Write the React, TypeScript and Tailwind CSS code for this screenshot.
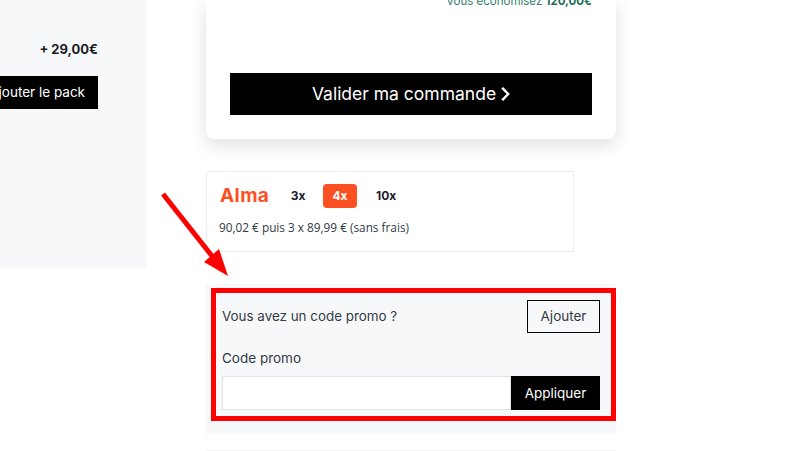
import React from "react";

const font = "font-['Inter','Liberation_Sans',sans-serif]";

function AlmaCard() {
  return (
    <div className="mt-8 h-[81px] w-[368px] border border-[#eeeeee] pl-3 pt-3">
      <div className="flex h-6 items-center">
        <span className="w-[63px] pl-px text-[19px] font-bold leading-6 tracking-[0.4px] text-[#fa5022]">Alma</span>
        <span className="w-[32px] text-center text-xs font-bold text-[#1c1c2b]">3x</span>
        <span className="ml-[9px] flex h-6 w-[34px] items-center justify-center rounded bg-[#fa5022] text-xs font-bold text-white">
          4x
        </span>
        <span className="ml-[19px] text-xs font-bold text-[#1c1c2b]">10x</span>
      </div>
      <p className="mt-[11px] font-['Open_Sans',sans-serif] text-[11.8px] leading-4 text-[#333a45]">
        90,02 € puis 3 x 89,99 € (sans frais)
      </p>
    </div>
  );
}

function PromoBox() {
  return (
    <div className="relative mt-8 h-[150px] bg-[#f7f8fa] px-4 pt-4">
      <div className="flex h-[33px] items-center justify-between">
        <span className="text-[13.4px] text-[#333a45]">Vous avez un code promo ?</span>
        <button className="h-[33px] w-[73px] border border-black text-[13.5px] text-[#333a45]">Ajouter</button>
      </div>
      <label className="mt-[16px] block text-[13.5px] leading-[18px] text-[#333a45]">Code promo</label>
      <div className="mt-[9px] flex h-[34px]">
        <input className="min-w-0 flex-1 border border-[#dfe1e6] bg-white" />
        <button className="w-[89px] bg-black text-[13.5px] text-white">Appliquer</button>
      </div>
      {/* annotation */}
      <div className="absolute left-[5px] top-[4px] h-[133px] w-[405px] border-[5px] border-[#ff0000]" />
    </div>
  );
}

export default function App() {
  return (
    <div className={`relative flex h-[451px] w-[811px] items-start overflow-hidden bg-white ${font}`}>
      <div className="flex h-[268px] w-[146px] shrink-0 flex-col items-end bg-[#f7f8fa] pr-12 pt-[41px]">
        <span className="text-[13px] font-bold leading-4 text-[#1c1c24]">+ 29,00€</span>
        <button className="mt-[19px] h-[33px] w-[124px] shrink-0 overflow-hidden bg-black pr-[13px] text-right text-[13.5px] whitespace-nowrap text-white">
          Ajouter le pack
        </button>
      </div>

      <div className="ml-[60px] w-[410px] shrink-0">
        <div className="flex h-[139px] flex-col rounded-b-lg bg-white px-6 shadow-[0_6px_18px_rgba(0,0,0,0.13)]">
          <p className="-mt-[6px] h-[14px] text-right text-[11.5px] leading-[14px] text-[#2f7d6b]">
            Vous économisez <b className="text-[#1e6f5c]">120,00€</b>
          </p>
          <button className="mt-[65px] flex h-[42px] w-full items-center justify-center gap-[5px] bg-black text-[17.5px] text-white">
            Valider ma commande
            <svg width="9" height="14" viewBox="0 0 9 14" fill="none" stroke="currentColor" strokeWidth="2.4">
              <path d="M1.2 0.8 L7.2 7 L1.2 13.2" />
            </svg>
          </button>
        </div>
        <AlmaCard />
        <PromoBox />
        <div className="mt-4 h-px bg-[#f3f3f3]" />
      </div>

      {/* annotation */}
      <svg className="absolute left-0 top-0" width="811" height="451" fill="none">
        <path d="M163 194 L212 256" stroke="#ff0000" strokeWidth="5" />
        <path d="M228 276 L204 262 L219 249 Z" fill="#ff0000" />
      </svg>
    </div>
  );
}
